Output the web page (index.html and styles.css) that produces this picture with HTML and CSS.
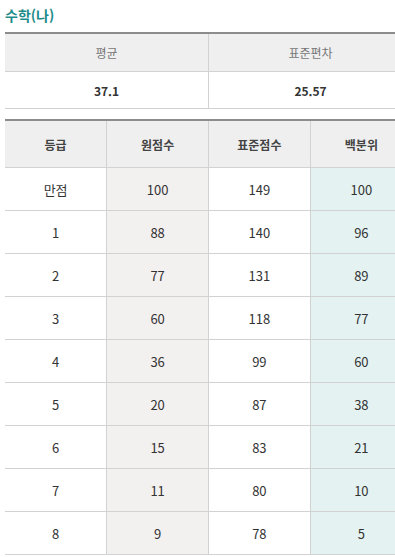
FILE: index.html
```html
<!DOCTYPE html>
<html lang="ko">
<head>
<meta charset="utf-8">
<link rel="stylesheet" href="styles.css">
</head>
<body>
<div class="page">
  <h2 class="title">수학(나)</h2>
  <table class="summary">
    <thead>
      <tr><th>평균</th><th>표준편차</th></tr>
    </thead>
    <tbody>
      <tr><td>37.1</td><td>25.57</td></tr>
    </tbody>
  </table>
  <table class="grades">
    <thead>
      <tr><th>등급</th><th>원점수</th><th>표준점수</th><th>백분위</th></tr>
    </thead>
    <tbody>
      <tr><td>만점</td><td class="raw">100</td><td>149</td><td class="pct">100</td></tr>
      <tr><td>1</td><td class="raw">88</td><td>140</td><td class="pct">96</td></tr>
      <tr><td>2</td><td class="raw">77</td><td>131</td><td class="pct">89</td></tr>
      <tr><td>3</td><td class="raw">60</td><td>118</td><td class="pct">77</td></tr>
      <tr><td>4</td><td class="raw">36</td><td>99</td><td class="pct">60</td></tr>
      <tr><td>5</td><td class="raw">20</td><td>87</td><td class="pct">38</td></tr>
      <tr><td>6</td><td class="raw">15</td><td>83</td><td class="pct">21</td></tr>
      <tr><td>7</td><td class="raw">11</td><td>80</td><td class="pct">10</td></tr>
      <tr><td>8</td><td class="raw">9</td><td>78</td><td class="pct">5</td></tr>
    </tbody>
  </table>
</div>
</body>
</html>
```
FILE: styles.css
```css
html, body {
  margin: 0;
  padding: 0;
  background: #fff;
  overflow: hidden;
}
.page {
  width: 407px;
  padding: 5px 0 0 5px;
  font-family: "Noto Sans CJK KR", "Noto Sans", sans-serif;
  color: #333;
}
.title {
  margin: 0;
  font-size: 14px;
  line-height: 20px;
  font-weight: 700;
  color: #1f8c8c;
  height: 27px;
}
table {
  width: 407px;
  border-collapse: collapse;
  table-layout: fixed;
}
.summary {
  border-top: 2px solid #8c8c8c;
}
.summary th {
  background: #efefef;
  height: 37px;
  padding: 0;
  font-weight: 400;
  font-size: 12px;
  color: #777;
  border-bottom: 1px solid #d2d2d2;
}
.summary td {
  height: 36px;
  padding: 0;
  font-weight: 700;
  font-size: 12px;
  color: #333;
  text-align: center;
  border-bottom: 1px solid #d2d2d2;
}
.summary th + th,
.summary td + td {
  border-left: 1px solid #d2d2d2;
}
.grades {
  margin-top: 10px;
  border-top: 2px solid #8c8c8c;
}
.grades th {
  background: #efefef;
  height: 46px;
  padding: 0;
  font-size: 12px;
  font-weight: 700;
  color: #444;
  border-bottom: 1px solid #d2d2d2;
}
.grades td {
  height: 42px;
  padding: 0;
  font-size: 13px;
  color: #333;
  text-align: center;
  border-bottom: 1px solid #d2d2d2;
}
.grades th + th,
.grades td + td {
  border-left: 1px solid #d2d2d2;
}
.grades td.raw {
  background: #f3f0f0;
}
.grades td.pct {
  background: #e4f2f2;
}
```
